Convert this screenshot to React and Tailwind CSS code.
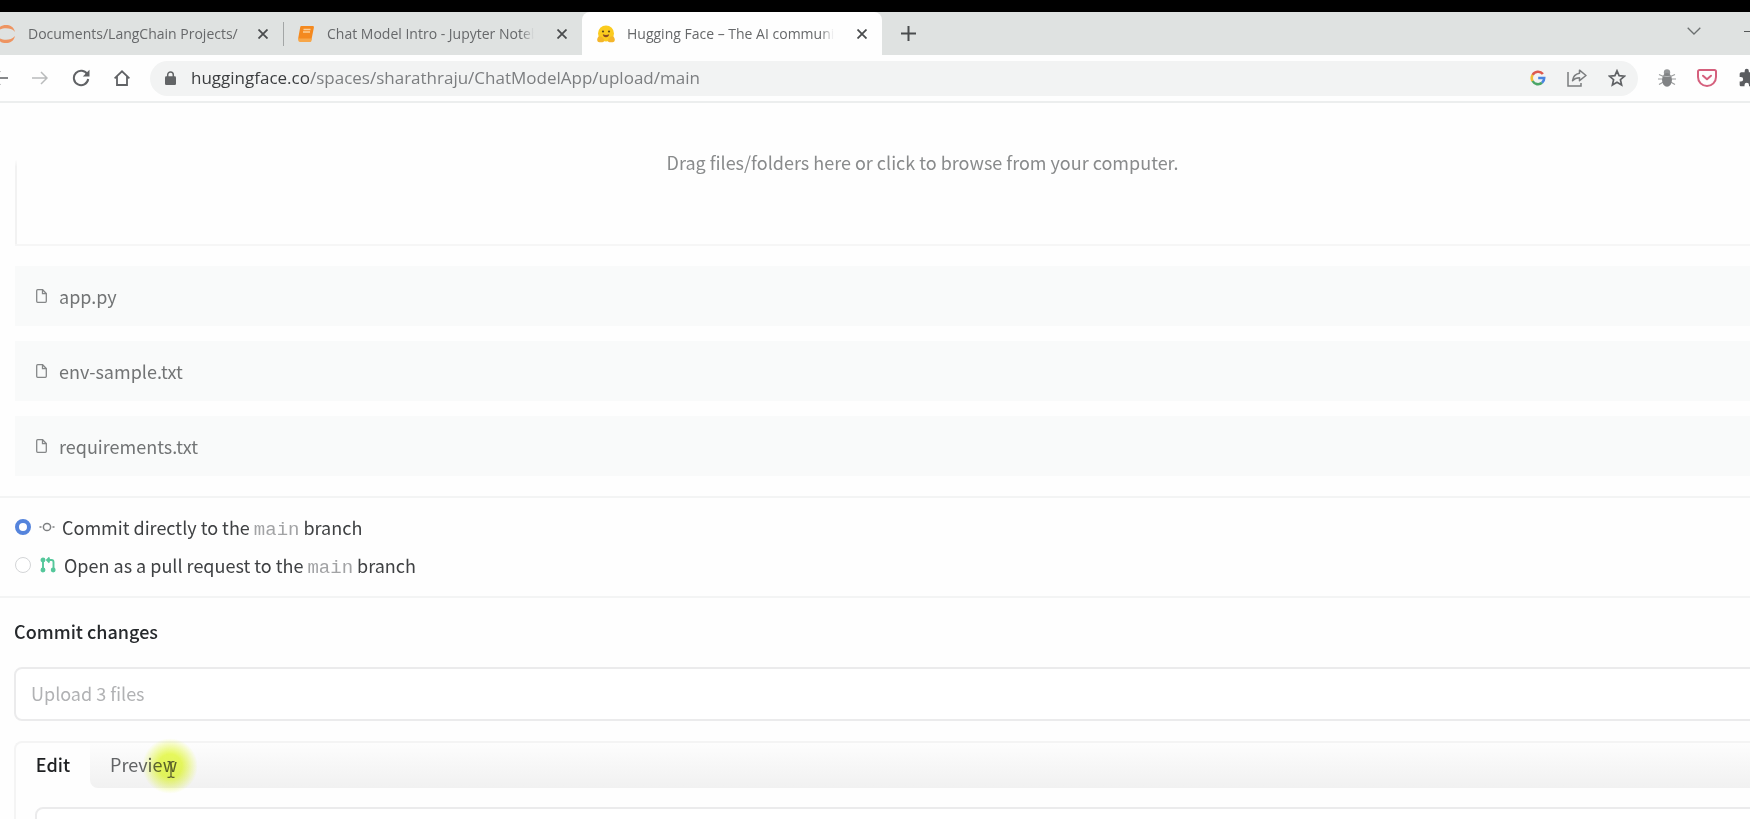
import React from "react";

const files = ["app.py", "env-sample.txt", "requirements.txt"];

function JupyterIcon() {
  return (
    <svg className="size-5 shrink-0" viewBox="0 0 20 20" aria-hidden="true">
      <path d="M1 8C2.500 2.500 6 1 10 1s7.500 1.500 9 7C16.500 5 13.500 4.300 10 4.300S3.500 5 1 8Z" fill="#ee9461" />
      <path d="M1 12c1.500 5.500 5 7 9 7s7.500-1.500 9-7c-2.500 3-5.500 3.700-9 3.700S3.500 15 1 12Z" fill="#ee9461" />
    </svg>
  );
}

function NotebookIcon() {
  return (
    <svg className="size-[18px] shrink-0" viewBox="0 0 18 18" aria-hidden="true">
      <path d="M4.500 1h11.200c.9 0 1.400.6 1.200 1.500L14.600 14c-.1.600-.6 1-1.200 1H3.200C1.800 15 1 14 1.300 12.700L3.200 2.200C3.300 1.500 3.800 1 4.500 1Z" fill="#f4891f" />
      <path d="M1.300 12.700C.8 15.500 1.500 17 3.200 17h9.600c1 0 1.500-.5 1.700-1.300l.5-2.200H3.200c-.9 0-1.500-.2-1.900-.8Z" fill="#f7a648" />
      <path d="M6.500 4.500h7M6 7h7" stroke="#fbcf98" strokeWidth="1.300" />
    </svg>
  );
}

function HuggingIcon() {
  return (
    <svg className="size-[18px] shrink-0" viewBox="0 0 18 18" aria-hidden="true">
      <circle cx="9" cy="8.500" r="8" fill="#fbcb1e" />
      <path d="M.3 15.500c-.5-2.200 1-4.500 2.700-4.300 1.800.2 3.500 2 4 3.500.4 1.300-.2 2.500-1.600 2.500H2.300c-1 0-1.800-.7-2-1.700Z" fill="#f4b52a" />
      <path d="M17.700 15.500c.5-2.200-1-4.500-2.700-4.300-1.800.2-3.500 2-4 3.500-.4 1.300.2 2.500 1.600 2.500h3.100c1 0 1.800-.7 2-1.700Z" fill="#f4b52a" />
      <circle cx="6" cy="6.500" r="1.100" fill="#5b4a1c" />
      <circle cx="12" cy="6.500" r="1.100" fill="#5b4a1c" />
      <path d="M5.800 9.300c2 1 4.400 1 6.400 0-.2 1.900-1.500 3-3.200 3s-3-1.100-3.200-3Z" fill="#8a4b22" />
    </svg>
  );
}

function CloseIcon() {
  return (
    <svg className="size-[10px]" viewBox="0 0 10 10" fill="none" stroke="#4a4c4e" strokeWidth="1.800" aria-hidden="true">
      <path d="M.5.5l9 9M9.500.5l-9 9" />
    </svg>
  );
}

function Tab({ icon, title, fade, active, className }) {
  return (
    <div className={`flex h-full items-center ${active ? "rounded-t-lg bg-[#fefefe]" : ""} ${className}`}>
      {icon}
      <a
        href="#tab"
        className={`ml-3 flex-1 overflow-hidden text-sm whitespace-nowrap text-[#66686a] ${fade ? "[mask-image:linear-gradient(to_right,black_86%,transparent_92%)]" : ""}`}
      >
        {title}
      </a>
      <button type="button" aria-label={`Close ${title}`} className="flex size-5 shrink-0 items-center justify-center">
        <CloseIcon />
      </button>
    </div>
  );
}

function TabStrip() {
  return (
    <div className="flex h-[43px] shrink-0 items-center bg-[#dfe2e1]">
      <Tab icon={<JupyterIcon />} title="Documents/LangChain Projects/" className="-ml-1 w-[277px] shrink-0" />
      <span className="ml-[10px] h-6 w-px shrink-0 bg-[#a3a6a6]" />
      <Tab icon={<NotebookIcon />} title="Chat Model Intro - Jupyter Notebook" fade className="w-[298px] shrink-0 pr-[10px] pl-[13px]" />
      <Tab icon={<HuggingIcon />} title="Hugging Face – The AI community" fade active className="w-[300px] shrink-0 pr-[10px] pl-[15px]" />
      <button type="button" aria-label="New tab" className="ml-4 flex size-5 items-center justify-center">
        <svg className="size-[15px]" viewBox="0 0 15 15" stroke="#4a4c4e" strokeWidth="2" aria-hidden="true">
          <path d="M7.500 0v15M0 7.500h15" />
        </svg>
      </button>
      <div className="-mr-2 ml-auto flex items-center gap-[42px]">
        <button type="button" aria-label="Search tabs" className="flex h-6 w-4 items-start justify-center pt-[5px]">
          <svg className="h-[8px] w-[14px]" viewBox="0 0 14 8" fill="none" stroke="#6c7070" strokeWidth="1.300" aria-hidden="true">
            <path d="M.7.700 7 7 13.300.7" />
          </svg>
        </button>
        <button type="button" aria-label="Minimize" className="flex h-6 w-[14px] items-start pt-[9px]">
          <span className="h-px w-full bg-[#555858]" />
        </button>
      </div>
    </div>
  );
}

function GoogleIcon() {
  return (
    <svg className="size-4" viewBox="0 0 16 16" fill="none" strokeWidth="2.600" aria-hidden="true">
      <path d="M12.900 4A6.200 6.200 0 0 0 2.600 5" stroke="#dd5a4e" />
      <path d="M2.600 4.900a6.200 6.200 0 0 0 0 6.200" stroke="#efbe3a" />
      <path d="M2.600 11a6.200 6.200 0 0 0 9.400 1.800" stroke="#4aa567" />
      <path d="M8.200 8h6a6.200 6.200 0 0 1-2.200 4.800" stroke="#4a84e0" />
    </svg>
  );
}

function ShareIcon() {
  return (
    <svg className="size-5" viewBox="0 0 20 20" fill="none" stroke="#7b7d7f" strokeWidth="1.500" aria-hidden="true">
      <path d="M1 4v14h13v-3" />
      <path d="M12.500 2.200 19 7.500l-6.500 5.200V9.800c-3 0-5.200.9-7 3 .5-4 2.800-7 7-7.600Z" strokeLinejoin="round" />
    </svg>
  );
}

function StarIcon() {
  return (
    <svg className="size-[18px]" viewBox="0 0 18 18" fill="none" stroke="#606265" strokeWidth="1.700" aria-hidden="true">
      <path d="m9 1.800 2.100 4.900 5.300.5-4 3.500 1.200 5.200L9 13.200l-4.600 2.700 1.200-5.200-4-3.500 5.300-.5Z" />
    </svg>
  );
}

function BugIcon() {
  return (
    <svg className="size-[18px]" viewBox="0 0 18 18" aria-hidden="true">
      <path d="M1 5.500l4 1.700M0 10h4.500M1 15.500l4-2.300M17 5.500l-4 1.700M18 10h-4.500M17 15.500l-4-2.300" stroke="#9a9c9d" strokeWidth="1.200" />
      <ellipse cx="9" cy="3.500" rx="3.200" ry="3.300" fill="#949698" />
      <ellipse cx="9" cy="10.800" rx="5" ry="6.900" fill="#818385" />
      <path d="M4.800 6.800c2.500 1 5.900 1 8.400 0" stroke="#b5b7b8" strokeWidth="1" fill="none" />
    </svg>
  );
}

function PocketIcon() {
  return (
    <svg className="h-[18px] w-5" viewBox="0 0 20 18" fill="none" stroke="#d5607d" strokeWidth="2" aria-hidden="true">
      <path d="M2.500 1h15c.8 0 1.500.6 1.500 1.500V8c0 5-4 9-9 9S1 13 1 8V2.500C1 1.600 1.700 1 2.500 1Z" />
      <path d="m6 6.700 4 3.600 4-3.600" strokeLinecap="round" strokeLinejoin="round" />
    </svg>
  );
}

function PuzzleIcon() {
  return (
    <svg className="size-5" viewBox="0 0 24 24" fill="#5b5d60" aria-hidden="true">
      <path d="M20.500 11H19V7a2 2 0 0 0-2-2h-4V3.500a2.500 2.500 0 0 0-5 0V5H4a2 2 0 0 0-2 2v3.800h1.500a2.700 2.700 0 0 1 0 5.400H2V20c0 1.100.9 2 2 2h3.800v-1.500a2.700 2.700 0 0 1 5.400 0V22H17a2 2 0 0 0 2-2v-4h1.500a2.500 2.500 0 0 0 0-5Z" />
    </svg>
  );
}

function Toolbar() {
  return (
    <div className="flex h-12 shrink-0 items-center border-b-2 border-[#eceeee] bg-[#fefefe]">
      <div className="-ml-2 flex shrink-0 items-center gap-6">
        <button type="button" aria-label="Back">
          <svg className="size-4" viewBox="0 0 16 16" fill="none" stroke="#5f6164" strokeWidth="1.700" aria-hidden="true">
            <path d="M16 8H1M8 1 1 8l7 7" />
          </svg>
        </button>
        <button type="button" aria-label="Forward">
          <svg className="size-4" viewBox="0 0 16 16" fill="none" stroke="#b9bbbc" strokeWidth="1.500" aria-hidden="true">
            <path d="M0 8h15M9 2l6 6-6 6" />
          </svg>
        </button>
        <button type="button" aria-label="Reload">
          <svg className="size-[18px]" viewBox="0 0 18 18" fill="none" stroke="#606265" strokeWidth="2" aria-hidden="true">
            <path d="M15.400 5.500A7.200 7.200 0 1 0 16.200 10" />
            <path d="M17.500.8v6.700h-6.700Z" fill="#606265" stroke="none" />
          </svg>
        </button>
        <button type="button" aria-label="Home">
          <svg className="size-4" viewBox="0 0 16 16" fill="none" stroke="#606265" strokeWidth="1.800" aria-hidden="true">
            <path d="M.6 8.300 8 1.300l7.400 7M3 6.500V15h10V6.500" />
          </svg>
        </button>
      </div>
      <div className="ml-5 flex h-[35px] flex-1 items-center rounded-full bg-[#f2f3f3] pr-3 pl-[15px]">
        <svg className="h-[14px] w-[11px] shrink-0" viewBox="0 0 11 14" aria-hidden="true">
          <path d="M2.700 6V3.800a2.800 2.800 0 0 1 5.600 0V6" fill="none" stroke="#626466" strokeWidth="1.500" />
          <rect y="5.200" width="11" height="8.800" rx="1.300" fill="#626466" />
        </svg>
        <a href="#address" className="ml-[15px] flex-1 text-[17px] whitespace-nowrap text-[#7c7e80]">
          <span className="text-[#3c3e40]">huggingface.co</span>/spaces/sharathraju/ChatModelApp/upload/main
        </a>
        <div className="flex items-center gap-[21px]">
          <button type="button" aria-label="Search with Google"><GoogleIcon /></button>
          <button type="button" aria-label="Share page"><ShareIcon /></button>
          <button type="button" aria-label="Bookmark page"><StarIcon /></button>
        </div>
      </div>
      <div className="-mr-2 ml-5 flex shrink-0 items-center gap-[21px]">
        <button type="button" aria-label="Debugger extension"><BugIcon /></button>
        <button type="button" aria-label="Save to Pocket"><PocketIcon /></button>
        <button type="button" aria-label="Extensions"><PuzzleIcon /></button>
      </div>
    </div>
  );
}

function FileRow({ name }) {
  return (
    <li className="flex h-[60px] items-center gap-3 bg-[#f9fafa] pl-[21px] text-lg text-[#727475]">
      <svg className="h-[14px] w-[11px] shrink-0" viewBox="0 0 11 14" fill="none" stroke="#858788" strokeWidth="1.300" aria-hidden="true">
        <path d="M1.700.7h4.900l3.700 3.800v7.800c0 .6-.4 1-1 1H1.700c-.6 0-1-.4-1-1V1.700c0-.6.400-1 1-1Z" />
        <path d="M6.500.700v4h3.800" />
      </svg>
      {name}
    </li>
  );
}

function BranchOption({ icon, value, text, checked }) {
  return (
    <label className="flex h-[38px] items-center text-lg whitespace-pre text-[#3f4143]">
      <input
        type="radio"
        name="target"
        value={value}
        defaultChecked={checked}
        className="mr-2 size-4 shrink-0 appearance-none rounded-full border border-[#d3d5d7] bg-white checked:border-4 checked:border-[#5584dc]"
      />
      {icon}
      <span>
        {text} <code className="font-['Liberation_Mono',monospace] text-[19px] leading-none text-[#a2a3a5]">main</code> branch
      </span>
    </label>
  );
}

export default function App() {
  return (
    <div className="flex h-screen flex-col overflow-hidden bg-[#fefefe] font-['Noto_Sans_CJK_SC',sans-serif]">
      <div className="h-3 shrink-0 bg-black" />
      <header className="shrink-0 overflow-hidden font-['Open_Sans',sans-serif]">
        <TabStrip />
        <Toolbar />
      </header>
      <main className="min-h-0 flex-1 overflow-hidden">
        <section className="-mr-20 pl-[15px]">
          <button
            type="button"
            className="flex h-[143px] w-full items-center justify-center border-b-2 border-[#f6f6f6] bg-[linear-gradient(to_bottom,transparent_40%,#f2f2f2_45%)] bg-[length:2px_100%] bg-left bg-no-repeat pb-6 text-lg text-[#898b8c]"
          >
            Drag files/folders here or click to browse from your computer.
          </button>
          <ul className="mt-5 flex flex-col gap-[15px]">
            {files.map((name) => (
              <FileRow key={name} name={name} />
            ))}
          </ul>
        </section>
        <fieldset className="mt-5 border-y-2 border-[#f3f4f4] pt-[10px] pb-3 pl-[15px]">
          <BranchOption
            value="direct"
            checked
            text="Commit directly to the"
            icon={
              <svg className="mr-[7px] size-4" viewBox="0 0 16 16" fill="none" stroke="#7d7f81" strokeWidth="1.500" aria-hidden="true">
                <circle cx="8" cy="8" r="3.600" />
                <path d="M.5 8h2M13.500 8h2" />
              </svg>
            }
          />
          <BranchOption
            value="pull"
            text="Open as a pull request to the"
            icon={
              <svg className="mr-2 ml-px size-4" viewBox="0 0 16 16" fill="none" stroke="#55c79b" strokeWidth="1.900" aria-hidden="true">
                <path d="M3 4v9M7 3h4.500C13 3 13.500 3.700 13.500 5v8M9.500.5 7 3l2.500 2.500" />
                <circle cx="3" cy="3" r="1.500" fill="#55c79b" />
                <circle cx="3" cy="13" r="1.500" fill="#55c79b" />
                <circle cx="13.200" cy="13" r="1.500" fill="#55c79b" />
              </svg>
            }
          />
        </fieldset>
        <section className="-mr-20 pl-[14px]">
          <h2 className="mt-[17px] text-lg leading-8 font-medium text-[#26292c]">
            <label htmlFor="summary">Commit changes</label>
          </h2>
          <input
            id="summary"
            placeholder="Upload 3 files"
            className="mt-5 block h-[54px] w-full rounded-lg border-2 border-[#ebebec] bg-white px-[15px] pb-[2px] text-lg placeholder:text-[#b1b2b4]"
          />
          <div className="mt-5 h-40 rounded-t-lg border-t-2 border-l-2 border-[#f4f4f4]">
            <div className="flex h-[45px] text-lg">
              <button type="button" className="w-[74px] pb-1 text-center font-medium text-[#1e2022]">Edit</button>
              <div className="flex flex-1 items-center rounded-bl-lg bg-linear-to-b from-[#fdfdfd] to-[#f1f1f1] pb-1 pl-5">
                <button type="button" className="relative text-[#626466]">
                  Preview
                  <span className="absolute -top-3 left-8 size-14 rounded-full bg-[radial-gradient(circle,#e8fc46dd_30%,#e8fc4600_70%)] mix-blend-multiply" />
                  <svg className="absolute top-[11px] left-[57px] h-[17px] w-2" viewBox="0 0 8 17" fill="none" stroke="#5b6030" strokeWidth="1.300" aria-hidden="true">
                    <path d="M.5.700h2.300L4 1.700 5.200.700h2.300M4 1.500v14M.5 16.300h2.300L4 15.300l1.200 1h2.300" />
                  </svg>
                </button>
              </div>
            </div>
            <textarea aria-label="Description" className="mt-[19px] ml-[19px] block h-24 w-full resize-none rounded-lg border-2 border-[#ebebec] bg-white" />
          </div>
        </section>
      </main>
    </div>
  );
}
